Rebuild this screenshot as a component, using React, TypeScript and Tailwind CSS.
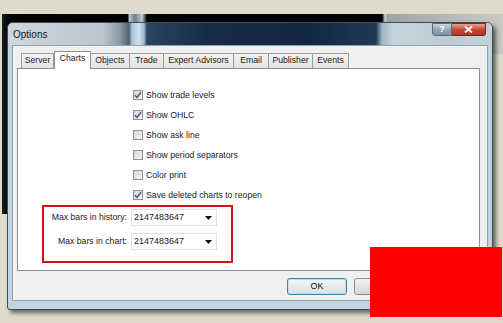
import React from "react";

const tabs = [
  { label: "Server", w: "w-[33px]" },
  { label: "Charts", w: "w-[37px]", active: true },
  { label: "Objects", w: "w-[39px]" },
  { label: "Trade", w: "w-[34px]" },
  { label: "Expert Advisors", w: "w-[70px]" },
  { label: "Email", w: "w-[35px]" },
  { label: "Publisher", w: "w-[44px]" },
  { label: "Events", w: "w-[36px]" },
];

const options = [
  { label: "Show trade levels", checked: true },
  { label: "Show OHLC", checked: true },
  { label: "Show ask line", checked: false },
  { label: "Show period separators", checked: false },
  { label: "Color print", checked: false },
  { label: "Save deleted charts to reopen", checked: true },
];

function CheckBox({ checked }: { checked: boolean }) {
  return (
    <span className="w-[10px] h-[10px] border border-[#8e9093] bg-[linear-gradient(135deg,#d2d4d6,#f6f6f6)] flex items-center justify-center">
      {checked && (
        <svg width="8" height="8" viewBox="0 0 8 8">
          <path d="M1 4.2 L3 6.4 L7 1.2" fill="none" stroke="#3d5a86" strokeWidth="1.5" />
        </svg>
      )}
    </span>
  );
}

function Combo({ label }: { label: string }) {
  return (
    <div className="flex items-center h-[17px]">
      <span className="w-[84px] text-right pr-[1px] text-[#222]">{label}</span>
      <div className="ml-[3px] w-[86px] h-[17px] bg-white border border-[#e2e2e2] flex items-center justify-between pl-[2px] pr-[4px]">
        <span className="text-[9px] text-[#222]">2147483647</span>
        <svg width="7" height="4" viewBox="0 0 7 4">
          <path d="M0 0 H7 L3.5 4 Z" fill="#111" />
        </svg>
      </div>
    </div>
  );
}

export default function App() {
  return (
    <div
      className="relative w-[503px] h-[323px] overflow-hidden bg-[#dedbcd] text-[8.7px] leading-none"
      style={{ fontFamily: '"Liberation Sans", Arial, sans-serif' }}
    >
      {/* window behind the dialog */}
      <div className="absolute left-[2px] top-[14px] w-[386px] h-[200px] bg-[linear-gradient(90deg,#1a1f24_0px,#050505_6px,#000_126px,#b8c4cc_127px,#6f7e88_133px,#c0ccd4_140px,#000_145px,#000_380px,#c8d2d8_383px,#8c969c_386px)]" />
      <div className="absolute left-[388px] top-[14px] w-[115px] h-[40px] bg-[linear-gradient(90deg,#9ea3a6,#b9bcbc_60%,#c9c9c3)]" />

      {/* dialog */}
      <div className="absolute left-[7px] top-[22px] w-[486px] h-[288px] rounded-t-[6px] rounded-b-[3px] border border-[#3e4d5a] bg-[#c3d3de] shadow-[3px_3px_4px_rgba(0,0,0,0.55)] flex flex-col overflow-hidden">
        <div className="h-[22px] shrink-0 flex items-start bg-[linear-gradient(90deg,#cfd6dc_0px,#bcc6ce_95px,#8a9aa6_112px,#4d6272_121px,#a9c4d8_124px,#d2e2ee_131px,#9ab6ca_136px,#2a4560_139px,#172c44_200px,#122740_300px,#1f3a56_368px,#9fb5c6_374px,#c8d4dc_385px,#bfcbd3_440px,#c6d0d7_100%)]">
          <span className="mt-[7px] ml-[5px] text-[10px] text-[#1b1b1b]">Options</span>
          <div className="ml-auto mr-[6px] flex">
            <div className="w-[20px] h-[13px] rounded-bl-[3px] border border-[#5b6a78] bg-[linear-gradient(180deg,#c9d4dd,#93a6b6_50%,#7d93a6)] flex items-center justify-center text-[9px] font-bold text-white">
              ?
            </div>
            <div className="w-[34px] h-[13px] rounded-br-[3px] border border-l-0 border-[#6e2a22] bg-[linear-gradient(180deg,#e7a596,#c9483a_50%,#b33423)] flex items-center justify-center">
              <svg width="9" height="7" viewBox="0 0 9 7">
                <path d="M1 0.5 L8 6.5 M8 0.5 L1 6.5" stroke="#fff" strokeWidth="1.8" />
              </svg>
            </div>
          </div>
        </div>

        {/* client area */}
        <div className="mx-[4px] h-[256px] bg-[#f0f0f0] border border-[#8fa3b3] flex flex-col">
          {/* tabs */}
          <div className="h-[22px] shrink-0 flex items-end pl-[8px] text-[#222]">
            {tabs.map((t) =>
              t.active ? (
                <div
                  key={t.label}
                  className={`${t.w} h-[18px] -mb-[1px] relative z-10 bg-white border border-b-0 border-[#8e8f8f] flex items-center justify-center pb-[4px]`}
                >
                  {t.label}
                </div>
              ) : (
                <div
                  key={t.label}
                  className={`${t.w} h-[15px] bg-[linear-gradient(180deg,#f2f2f2,#e3e3e3)] border border-b-0 border-l-0 first:border-l border-[#9a9a9a] flex items-center justify-center pb-[1px]`}
                >
                  {t.label}
                </div>
              )
            )}
          </div>

          {/* panel */}
          <div className="ml-[4px] w-[463px] h-[203px] bg-white border border-[#8e8f8f] flex flex-col">
            <div className="pt-[16px] pl-[115px] flex flex-col">
              {options.map((o) => (
                <div key={o.label} className="h-[20px] flex items-center gap-[3px] text-[#222]">
                  <CheckBox checked={o.checked} />
                  <span>{o.label}</span>
                </div>
              ))}
            </div>
            <div className="ml-[24px] w-[191px] h-[58px] border-2 border-[#d3141c] pt-[2px] flex flex-col gap-[7px]">
              <Combo label="Max bars in history:" />
              <Combo label="Max bars in chart:" />
            </div>
          </div>

          {/* buttons */}
          <div className="mt-[7px] flex pl-[274px] gap-[7px] text-[#111]">
            <div className="w-[60px] h-[17px] rounded-[3px] border border-[#3c82b4] bg-[linear-gradient(180deg,#f6f8fa,#e6ebef_50%,#d8e0e6)] shadow-[inset_0_0_0_1px_#bfe0f4] flex items-center justify-center text-[9px]">
              OK
            </div>
            <div className="w-[60px] h-[17px] rounded-[3px] border border-[#8c8c8c] bg-[linear-gradient(180deg,#f4f4f4,#e4e4e4_50%,#d4d4d4)] flex items-center justify-center text-[9px]">
              Cancel
            </div>
            <div className="w-[60px] h-[17px] rounded-[3px] border border-[#8c8c8c] bg-[linear-gradient(180deg,#f4f4f4,#e4e4e4_50%,#d4d4d4)] flex items-center justify-center text-[9px]">
              Apply
            </div>
          </div>
        </div>
      </div>

      {/* red cover */}
      <div className="absolute left-[370px] top-[247px] w-[132px] h-[70px] bg-[#ff0000]" />
    </div>
  );
}
